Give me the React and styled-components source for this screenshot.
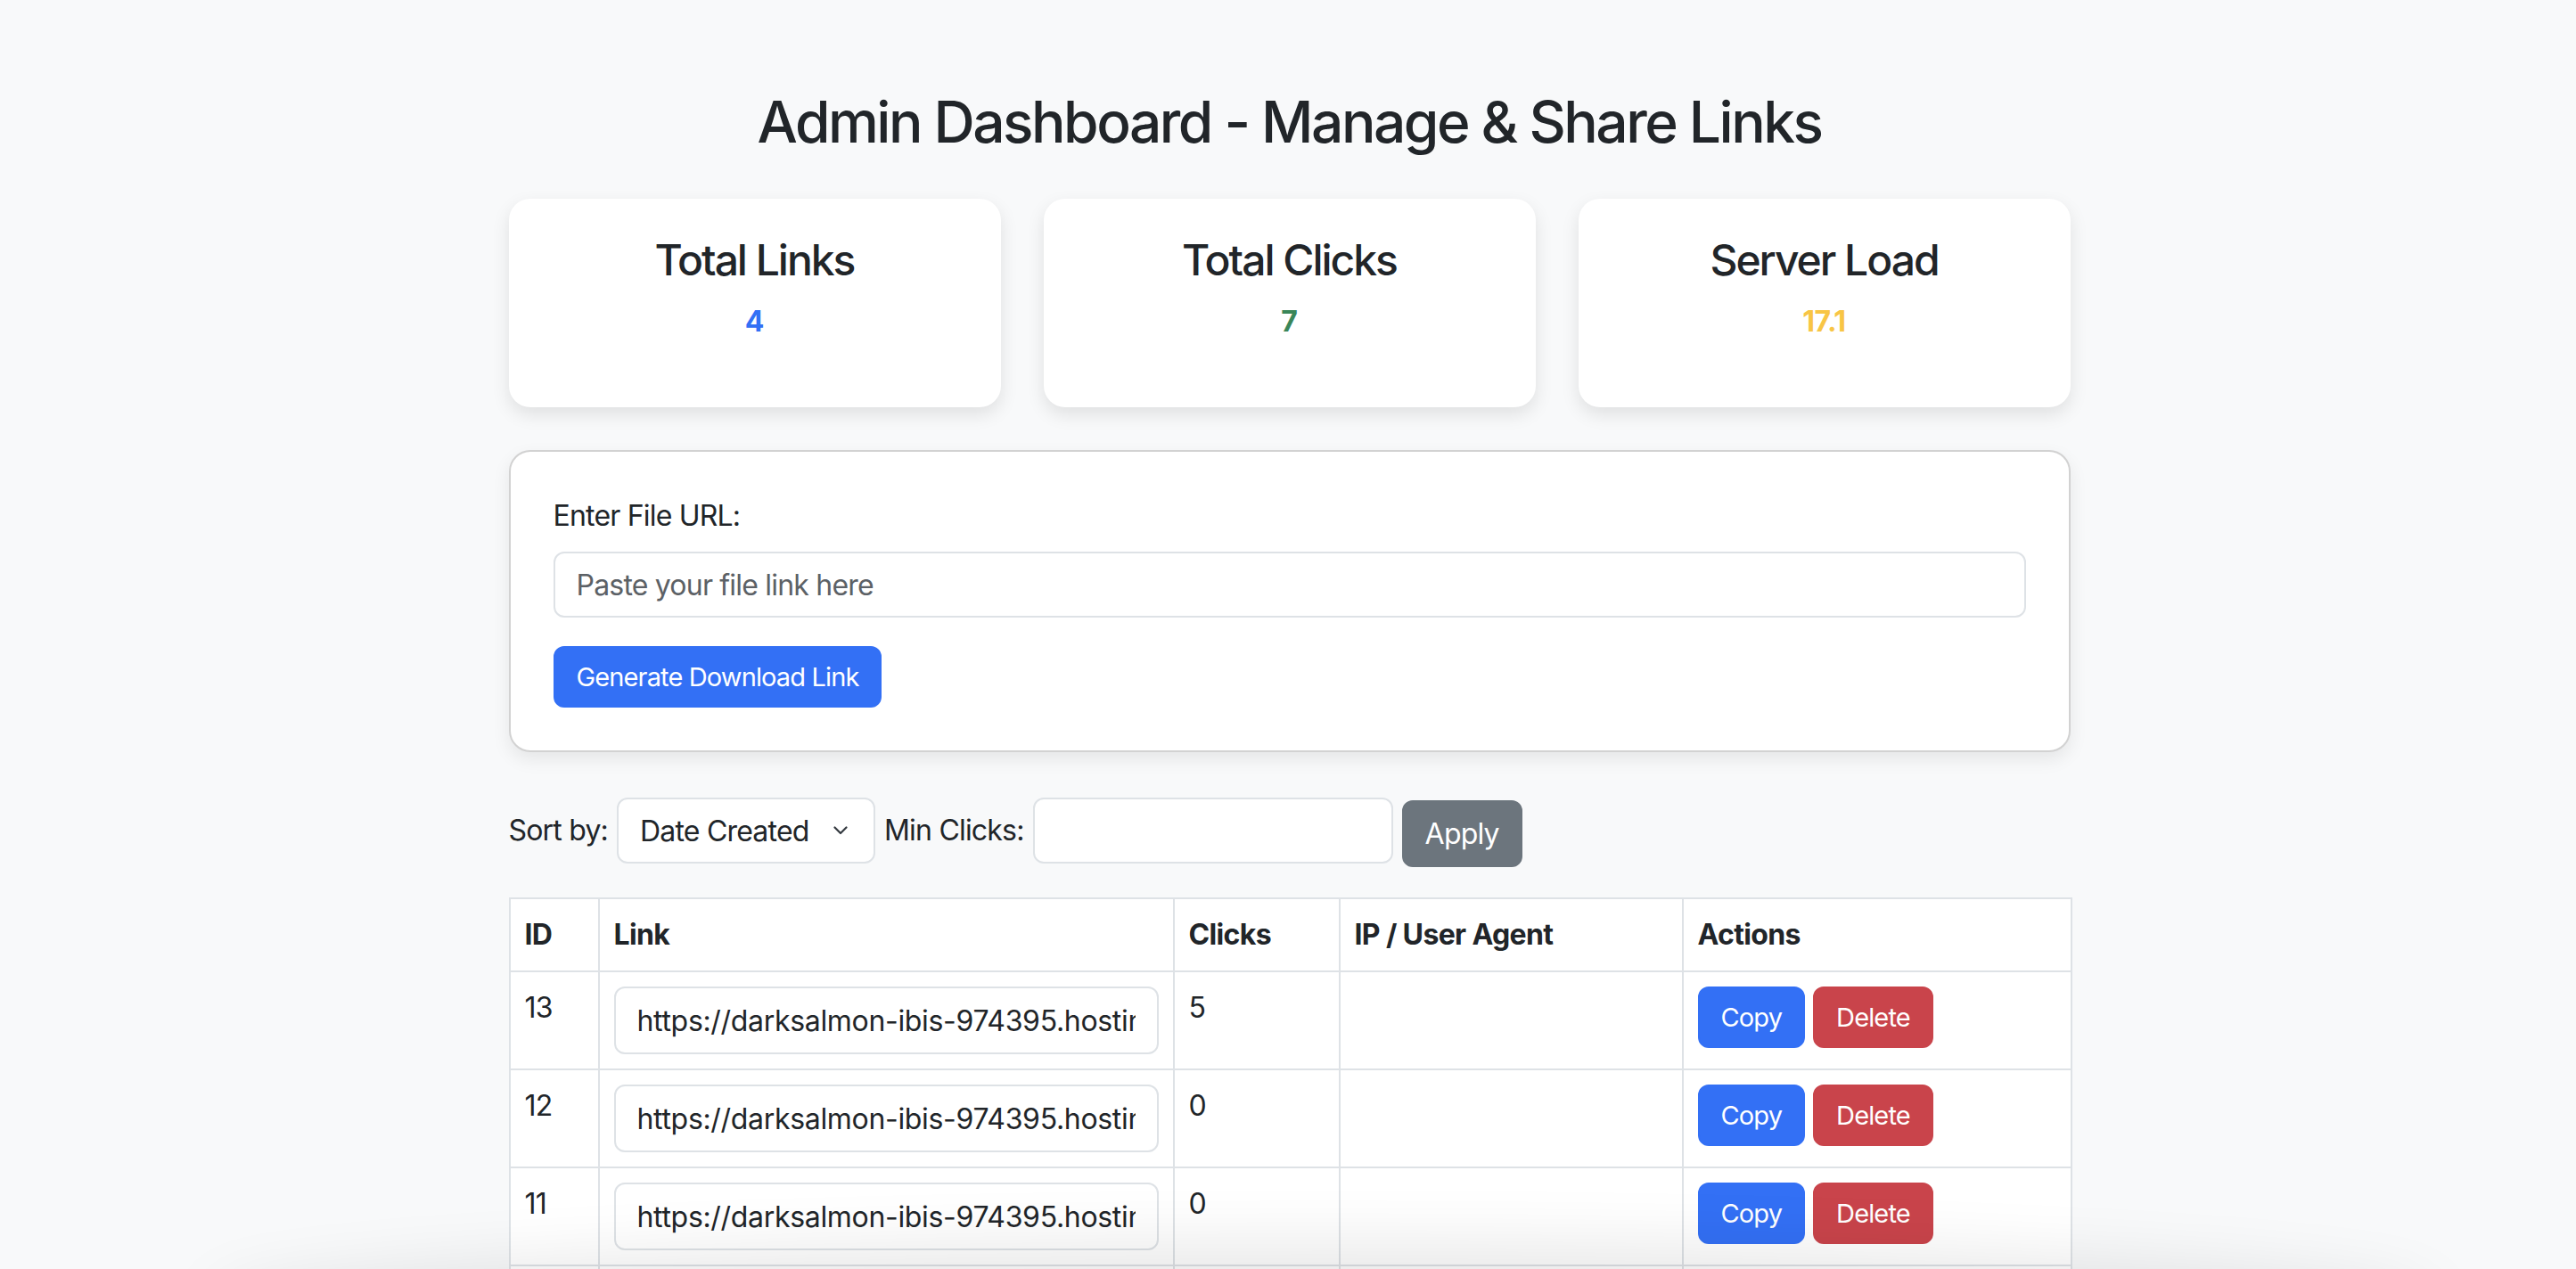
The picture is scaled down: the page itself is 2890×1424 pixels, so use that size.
import React from "react";
import styled, { createGlobalStyle } from "styled-components";

const GlobalStyle = createGlobalStyle`
  html, body {
    margin: 0;
    padding: 0;
    background: #f8f9fa;
  }
  body {
    font-family: Inter, "Noto Sans", "Liberation Sans", sans-serif;
    color: #212529;
    font-size: 32px;
    line-height: 48px;
    letter-spacing: -0.025em;
  }
  * { box-sizing: border-box; }
`;

const Page = styled.div`
  padding: 98px 0 0 3px;
`;

const Container = styled.main`
  width: 1752px;
  margin: 0 auto;
`;

const Title = styled.h2`
  margin: 0 0 48px;
  font-size: 64px;
  line-height: 77px;
  font-weight: 500;
  letter-spacing: -0.039em;
  text-align: center;
  color: #212529;
`;

const StatsGrid = styled.section`
  display: grid;
  grid-template-columns: repeat(3, 1fr);
  gap: 48px;
  margin-bottom: 48px;
`;

const StatCard = styled.div`
  background: #fff;
  border-radius: 24px;
  box-shadow: 0 8px 20px rgba(0, 0, 0, 0.1);
  padding: 40px;
  text-align: center;
`;

const StatTitle = styled.h4`
  margin: 0 0 16px;
  font-size: 48px;
  line-height: 58px;
  font-weight: 500;
  letter-spacing: -0.042em;
`;

const StatValue = styled.p`
  margin: 0 0 32px;
  font-size: 32px;
  line-height: 48px;
  font-weight: 700;
  letter-spacing: -0.01em;
  color: ${(p) => p.$color};
`;

const FormCard = styled.section`
  background: #fff;
  border: 2px solid rgba(0, 0, 0, 0.175);
  border-radius: 24px;
  box-shadow: 0 8px 20px rgba(0, 0, 0, 0.08);
  padding: 48px;
  margin-bottom: 51px;
`;

const FieldLabel = styled.label`
  display: block;
  font-size: 32px;
  line-height: 48px;
  margin-bottom: 16px;
`;

const TextInput = styled.input`
  display: block;
  width: ${(p) => p.$width || "100%"};
  height: ${(p) => p.$height || "74px"};
  margin: ${(p) => p.$margin || "0"};
  padding: 0 24px;
  font-family: inherit;
  font-size: 32px;
  letter-spacing: ${(p) => p.$spacing || "-0.025em"};
  color: #212529;
  background: #fff;
  border: 2px solid #dee2e6;
  border-radius: 12px;
  outline: none;
  &::placeholder {
    color: #5c6166;
  }
`;

const Button = styled.button`
  font-family: inherit;
  font-size: ${(p) => (p.$large ? "32px" : "29px")};
  line-height: ${(p) => (p.$large ? "48px" : "43px")};
  letter-spacing: ${(p) => (p.$large ? "-0.025em" : "-0.03em")};
  padding: 11px 24px;
  color: #fff;
  background: ${(p) => p.$bg};
  border: 2px solid ${(p) => p.$bg};
  border-radius: 12px;
  cursor: pointer;
  white-space: nowrap;
`;

const FilterRow = styled.div`
  display: flex;
  align-items: flex-start;
  gap: 10px;
  margin-bottom: 34px;
`;

const FilterLabel = styled.label`
  font-size: 32px;
  line-height: 74px;
`;

const SelectWrap = styled.div`
  position: relative;
  width: 290px;
  height: 74px;
`;

const Select = styled.select`
  appearance: none;
  -webkit-appearance: none;
  width: 100%;
  height: 100%;
  padding: 0 40px 0 24px;
  font-family: inherit;
  font-size: 32px;
  letter-spacing: -0.025em;
  color: #212529;
  background: #fff;
  border: 2px solid #dee2e6;
  border-radius: 12px;
  outline: none;
`;

const Chevron = styled.svg`
  position: absolute;
  right: 31px;
  top: 50%;
  margin-top: -5px;
  width: 16px;
  height: 10px;
  pointer-events: none;
`;

const ApplyButton = styled(Button)`
  margin-top: 3px;
  height: 75px;
  padding: 0 24px;
`;

const Table = styled.table`
  width: 100%;
  border-collapse: collapse;
  table-layout: fixed;
  background: #fff;
  font-size: 32px;
  line-height: 48px;
`;

const Th = styled.th`
  width: ${(p) => p.$w}px;
  text-align: left;
  font-weight: 700;
  letter-spacing: -0.02em;
  padding: 16px;
  border: 2px solid #dee2e6;
  vertical-align: top;
`;

const Td = styled.td`
  padding: 16px;
  border: 2px solid #dee2e6;
  vertical-align: top;
`;

const Actions = styled.div`
  display: flex;
  gap: 9px;
`;

const BottomShade = styled.div`
  position: fixed;
  left: 260px;
  right: 180px;
  bottom: -80px;
  height: 80px;
  border-radius: 50%;
  box-shadow: 0 0 70px 30px rgba(0, 0, 0, 0.09);
  pointer-events: none;
`;

const links = [
  { id: 13, url: "https://darksalmon-ibis-974395.hostingersite.com/download.php?file=13", clicks: 5 },
  { id: 12, url: "https://darksalmon-ibis-974395.hostingersite.com/download.php?file=12", clicks: 0 },
  { id: 11, url: "https://darksalmon-ibis-974395.hostingersite.com/download.php?file=11", clicks: 0 },
  { id: 10, url: "https://darksalmon-ibis-974395.hostingersite.com/download.php?file=10", clicks: 2 },
];

const stats = [
  { title: "Total Links", value: "4", color: "#3370f5" },
  { title: "Total Clicks", value: "7", color: "#3a8659" },
  { title: "Server Load", value: "17.1", color: "#f8c545" },
];

export default function App() {
  return (
    <Page>
      <GlobalStyle />
      <Container>
        <Title>Admin Dashboard - Manage &amp; Share Links</Title>

        <StatsGrid>
          {stats.map((s) => (
            <StatCard key={s.title}>
              <StatTitle>{s.title}</StatTitle>
              <StatValue $color={s.color}>{s.value}</StatValue>
            </StatCard>
          ))}
        </StatsGrid>

        <FormCard>
          <FieldLabel htmlFor="fileUrl">Enter File URL:</FieldLabel>
          <TextInput id="fileUrl" placeholder="Paste your file link here" $margin="0 0 32px" />
          <Button $bg="#3370f5">Generate Download Link</Button>
        </FormCard>

        <FilterRow>
          <FilterLabel htmlFor="sortBy">Sort by:</FilterLabel>
          <SelectWrap>
            <Select id="sortBy" defaultValue="date">
              <option value="date">Date Created</option>
              <option value="clicks">Clicks</option>
            </Select>
            <Chevron viewBox="0 0 16 10" fill="none">
              <path d="M1.5 1.5 8 8l6.5-6.5" stroke="#343a40" strokeWidth="2.2" strokeLinecap="round" strokeLinejoin="round" />
            </Chevron>
          </SelectWrap>
          <FilterLabel htmlFor="minClicks">Min Clicks:</FilterLabel>
          <TextInput id="minClicks" type="number" $width="404px" />
          <ApplyButton $large $bg="#6c757d">Apply</ApplyButton>
        </FilterRow>

        <Table>
          <thead>
            <tr>
              <Th $w={100}>ID</Th>
              <Th $w={645}>Link</Th>
              <Th $w={186}>Clicks</Th>
              <Th $w={385}>IP / User Agent</Th>
              <Th $w={436}>Actions</Th>
            </tr>
          </thead>
          <tbody>
            {links.map((l) => (
              <tr key={l.id}>
                <Td>{l.id}</Td>
                <Td>
                  <TextInput readOnly value={l.url} $height="76px" $spacing="-0.01em" />
                </Td>
                <Td>{l.clicks}</Td>
                <Td></Td>
                <Td>
                  <Actions>
                    <Button $bg="#3370f5">Copy</Button>
                    <Button $bg="#c9444b">Delete</Button>
                  </Actions>
                </Td>
              </tr>
            ))}
          </tbody>
        </Table>
      </Container>
      <BottomShade />
    </Page>
  );
}
